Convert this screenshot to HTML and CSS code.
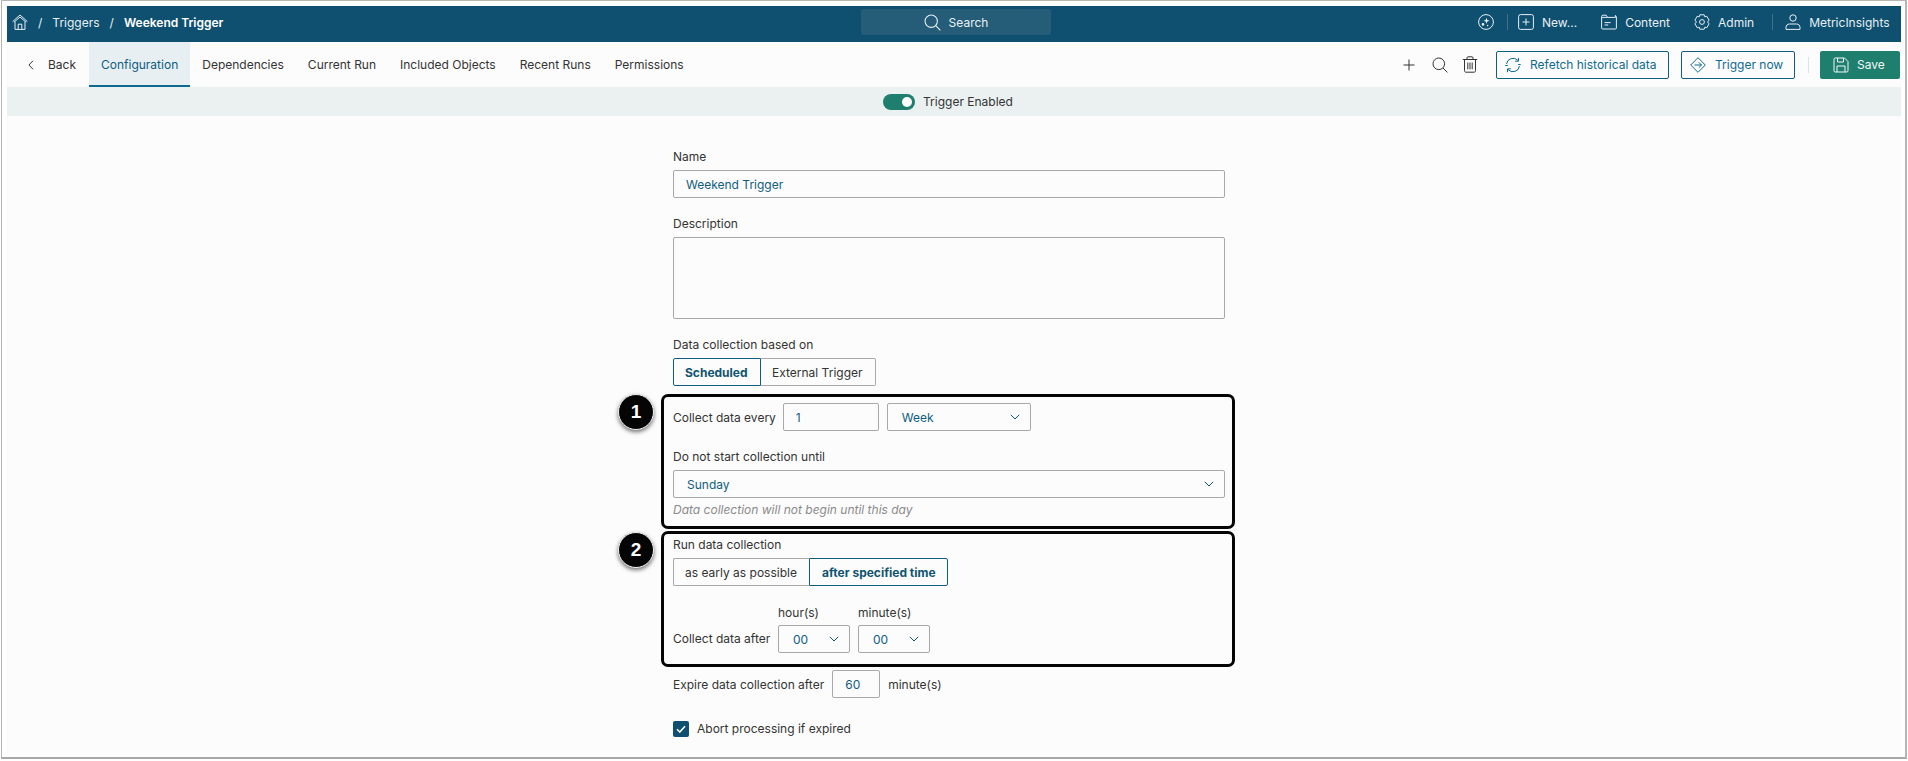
FILE: index.html
```html
<!DOCTYPE html>
<html lang="en">
<head>
<meta charset="utf-8">
<title>Weekend Trigger</title>
<link rel="stylesheet" href="styles.css">
</head>
<body>
<div class="frame">
  <div class="app">
    <header class="topbar">
      <div class="crumbs">
        <svg class="ico home" viewBox="0 0 16 16"><path d="M.6 7.6 8 1l7.4 6.6M2 8.2 8 3l6 5.2M3 7.6v7.8h10V7.6M6.2 15.4V10.2h3.6v5.2"/></svg>
        <span class="sep">/</span>
        <span class="crumb">Triggers</span>
        <span class="sep">/</span>
        <span class="crumb current">Weekend Trigger</span>
      </div>
      <div class="search">
        <svg class="ico search-ico" viewBox="0 0 16 16"><circle cx="6.8" cy="6.8" r="5.8"/><path d="m11 11 4.4 4.4"/></svg>
        <span>Search</span>
      </div>
      <nav class="usernav">
        <svg class="ico ai" viewBox="0 0 16 16"><circle cx="8" cy="8" r="7.4"/><path class="fill" d="M8.5 3.8 9.3 6l2.2.8-2.2.8-.8 2.2-.8-2.2-2.2-.8 2.2-.8z"/><circle class="fill" cx="5" cy="10.4" r="1.3"/><circle class="fill" cx="9.6" cy="11.6" r=".8"/></svg>
        <span class="vline first"></span>
        <span class="navitem new"><svg class="ico" viewBox="0 0 16 16"><rect x=".6" y=".6" width="14.8" height="14.8" rx="2"/><path d="M8 4.5v7M4.5 8h7"/></svg>New...</span>
        <span class="navitem content"><svg class="ico" viewBox="0 0 16 16"><path d="M.6 14V2.4c0-.7.5-1.2 1.2-1.2h3.4l1.4 2.2h7.8v-2l1 1.6v11c0 .6-.4 1-1 1H1.6c-.6 0-1-.4-1-1zM1 3.4h5.6M3.6 8.6h6M3.6 11h3.6"/></svg>Content</span>
        <span class="navitem admin"><svg class="ico" viewBox="0 0 16 16"><path d="M5.8.8h4.4l.6 2 2-.5 2.3 3.8-1.5 1.9 1.5 1.9-2.3 3.8-2-.5-.6 2H5.8l-.6-2-2 .5L.9 9.9 2.400 8 .9 6.100l2.300-3.800 2 .5z"/><circle cx="8" cy="8" r="2.400"/></svg>Admin</span>
        <span class="vline"></span>
        <span class="navitem user"><svg class="ico" viewBox="0 0 16 16"><circle cx="8" cy="4" r="3.200"/><path d="M1 15.400v-2c0-2 1.500-3.400 3.500-3.400h7c2 0 3.500 1.400 3.500 3.400v2z"/></svg>MetricInsights</span>
      </nav>
    </header>

    <div class="tabbar">
      <span class="back"><svg class="chev-left" viewBox="0 0 6 10"><path d="M5 .8.9 5 5 9.200"/></svg>Back</span>
      <ul class="tabs">
        <li class="tab active">Configuration</li>
        <li class="tab">Dependencies</li>
        <li class="tab">Current Run</li>
        <li class="tab">Included Objects</li>
        <li class="tab">Recent Runs</li>
        <li class="tab">Permissions</li>
      </ul>
      <div class="actions">
        <svg class="tool plus" viewBox="0 0 12 12"><path d="M6 .5v11M.5 6h11"/></svg>
        <svg class="tool lens" viewBox="0 0 16 16"><circle cx="6.800" cy="6.800" r="5.800"/><path d="m11 11 4.400 4.400"/></svg>
        <svg class="tool bin" viewBox="0 0 16 17"><path d="M.8 3.500h14.400M5 3.500V1.800c0-.6.400-1 1-1h4c.6 0 1 .4 1 1v1.700M2.500 3.500v11.200c0 .9.600 1.500 1.500 1.500h8c.9 0 1.500-.6 1.500-1.500V3.500M5.800 6.500v6.800M8 6.500v6.800M10.200 6.500v6.800"/></svg>
        <button class="btn outline refetch"><svg class="btn-ico" viewBox="0 0 16 16"><path d="M1.500 7A6.600 6.600 0 0 1 13 3.500M14.500 9A6.600 6.600 0 0 1 3 12.500M13.500.8v3.400h-3.400M2.500 15.200v-3.400h3.400M.3 8.500h2.500M13.200 7.500h2.500"/></svg>Refetch historical data</button>
        <button class="btn outline trigger"><svg class="btn-ico" viewBox="0 0 16 16"><path d="M8 .7 15.300 8 8 15.300.7 8zM4.500 8h7M8.800 5.300 11.500 8l-2.700 2.700"/></svg>Trigger now</button>
        <span class="tooldiv"></span>
        <button class="btn solid"><svg class="btn-ico" viewBox="0 0 16 16"><path d="M1 2.200C1 1.500 1.500 1 2.200 1h9.300L15 4.500v9.300c0 .7-.5 1.200-1.200 1.200H2.200C1.500 15 1 14.500 1 13.800zM4.500 1v4h6V1M4 15V9h8v6"/></svg>Save</button>
      </div>
    </div>

    <div class="band">
      <span class="toggle"><span class="knob"></span></span>
      <span>Trigger Enabled</span>
    </div>

    <main class="form">
      <label class="label">Name</label>
      <input class="field wide" value="Weekend Trigger">

      <label class="label gap18">Description</label>
      <textarea class="field wide area"></textarea>

      <label class="label gap18">Data collection based on</label>
      <div class="seg">
        <span class="seg-btn on">Scheduled</span>
        <span class="seg-btn external">External Trigger</span>
      </div>

      <div class="row r-every">
        <span>Collect data every</span>
        <input class="field num" value="1">
        <span class="field select week">Week<svg class="chev" viewBox="0 0 10 6"><path d="M.8.8 5 5 9.200.8"/></svg></span>
      </div>

      <label class="label gap18">Do not start collection until</label>
      <span class="field select wide">Sunday<svg class="chev" viewBox="0 0 10 6"><path d="M.8.8 5 5 9.200.8"/></svg></span>
      <p class="hint">Data collection will not begin until this day</p>

      <label class="label gap19">Run data collection</label>
      <div class="seg">
        <span class="seg-btn early">as early as possible</span>
        <span class="seg-btn on">after specified time</span>
      </div>

      <div class="time-grid">
        <span></span>
        <span class="unit">hour(s)</span>
        <span class="unit">minute(s)</span>
        <span class="raised">Collect data after</span>
        <span class="field select tiny">00<svg class="chev" viewBox="0 0 10 6"><path d="M.8.8 5 5 9.200.8"/></svg></span>
        <span class="field select tiny">00<svg class="chev" viewBox="0 0 10 6"><path d="M.8.8 5 5 9.200.8"/></svg></span>
      </div>

      <div class="row r-expire">
        <span>Expire data collection after</span>
        <input class="field num small" value="60">
        <span>minute(s)</span>
      </div>

      <div class="check-row">
        <span class="check"><svg viewBox="0 0 10 8"><path d="M1 4.200 3.800 7 9 1.200"/></svg></span>
        <span class="raised">Abort processing if expired</span>
      </div>

      <div class="note note-one"></div>
      <div class="note note-two"></div>
      <div class="badge badge-one">1</div>
      <div class="badge badge-two">2</div>
    </main>
  </div>
</div>
</body>
</html>
```

FILE: styles.css
```css
* { box-sizing: border-box; }
html, body { margin: 0; padding: 0; background: #fff; }
body {
  width: 1908px;
  height: 761px;
  overflow: hidden;
  font-family: Inter, "Liberation Sans", sans-serif;
  font-size: 12px;
  color: #333;
}
.frame {
  width: 1906px;
  height: 759px;
  margin-left: 1px;
  padding: 5px 4px 0 5px;
  background: #fff;
  border: 1px solid #b5b5b5;
  border-bottom: 2px solid #a8a8a8;
  border-right-width: 2px;
}
.app { height: 751px; background: #fcfcfc; }

/* top bar */
.topbar {
  display: grid;
  grid-template-columns: 854px 190px 1fr;
  align-items: center;
  height: 36px;
  padding-bottom: 4px;
  background: #0f4f70;
  color: #e8f0f4;
}
.ico { width: 16px; height: 16px; fill: none; stroke: currentColor; stroke-width: 1; flex: none; }
.ico .fill { fill: currentColor; stroke: none; }
.crumbs { display: flex; align-items: center; padding-left: 5px; }
.sep { margin: 0 10px; }
.crumb.current { font-weight: 600; color: #fff; }
.search {
  display: flex;
  align-items: center;
  justify-content: center;
  gap: 8px;
  height: 26px;
  background: #255d79;
  border-radius: 2px;
}
.search-ico { width: 17px; height: 17px; }
.usernav { display: flex; align-items: center; padding-left: 427px; }
.usernav .ai { margin-right: 13px; }
.vline { width: 1px; height: 16px; background: #40708b; }
.vline.first { margin-right: 10px; }
.navitem { display: flex; align-items: center; gap: 8px; white-space: nowrap; }
.navitem.new { margin-right: 24px; }
.navitem.content { margin-right: 24px; }
.navitem.admin { margin-right: 18px; }
.navitem.user { margin-left: 12px; }

/* tabs */
.tabbar { display: flex; align-items: center; height: 45px; }
.back { display: flex; align-items: center; width: 82px; padding-left: 21px; }
.chev-left { width: 6px; height: 10px; margin-right: 14px; fill: none; stroke: #333; stroke-width: 1; }
.tabs { display: flex; height: 45px; margin: 0; padding: 0; list-style: none; }
.tab { display: flex; align-items: center; padding: 0 12px; }
.tab.active { background: #e8eff2; color: #0f5d80; box-shadow: inset 0 -2px 0 #0f6a8f; }
.actions { display: flex; align-items: center; margin-left: auto; padding-right: 1px; }
.tool { fill: none; stroke: #333; stroke-width: 1; flex: none; }
.plus { width: 12px; height: 12px; margin-right: 17px; }
.lens { width: 16px; height: 16px; margin-right: 14px; }
.bin { width: 16px; height: 17px; margin-right: 18px; }
.btn {
  display: flex;
  align-items: center;
  height: 28px;
  padding: 0 8px;
  font: inherit;
  white-space: nowrap;
  border-radius: 2px;
}
.btn.outline { background: #fcfcfc; color: #0f6a8f; border: 1px solid #0f5d80; }
.btn.refetch { width: 173px; gap: 9px; margin-right: 12px; }
.btn.trigger { width: 114px; gap: 9px; }
.btn.solid { width: 80px; gap: 8px; padding-left: 13px; background: #1f7f6f; color: #f2f8f6; border: 0; }
.btn-ico { width: 16px; height: 16px; fill: none; stroke: currentColor; stroke-width: 1; flex: none; }
.tooldiv { width: 1px; height: 16px; margin: 0 11px 0 13px; background: #e2e2e2; }

/* band */
.band {
  display: flex;
  align-items: center;
  justify-content: center;
  gap: 8px;
  height: 29px;
  padding-right: 12px;
  background: #ebf1f1;
}
.toggle {
  display: flex;
  align-items: center;
  justify-content: flex-end;
  width: 32px;
  height: 16px;
  padding-right: 3px;
  background: #1f7f6f;
  border-radius: 8px;
}
.knob { width: 10px; height: 10px; background: #fff; border-radius: 50%; }

/* form */
.form {
  position: relative;
  display: flex;
  flex-direction: column;
  align-items: flex-start;
  width: 552px;
  margin-left: 666px;
  padding-top: 33px;
}
.label { display: block; height: 16px; line-height: 16px; margin-bottom: 5px; }
.gap18 { margin-top: 18px; }
.gap19 { margin-top: 19px; }
.field {
  display: block;
  height: 28px;
  padding: 0 12px;
  background: #fcfcfc;
  border: 1px solid #a8a8a8;
  border-radius: 2px;
  font: inherit;
  color: #0f5d80;
  outline: 0;
}
.wide { width: 552px; }
.area { height: 82px; resize: none; }
.select { display: flex; align-items: center; justify-content: space-between; padding: 0 10px 0 13px; }
.select.week, .select.tiny { padding-left: 14px; }
.chev { width: 10px; height: 6px; fill: none; stroke: #0f5470; stroke-width: 1; flex: none; }
.seg { display: flex; height: 28px; }
.seg-btn {
  display: flex;
  align-items: center;
  padding: 0 11px;
  white-space: nowrap;
  border: 1px solid #a8a8a8;
  border-radius: 2px;
}
.seg-btn.on { font-weight: 700; color: #0f5470; border-color: #0f5d80; }
.seg-btn.on:first-child { width: 88px; border-radius: 2px 0 0 2px; }
.seg-btn.external { width: 115px; border-left: 0; border-radius: 0 2px 2px 0; }
.seg-btn.early { width: 136px; border-right: 0; border-radius: 2px 0 0 2px; }
.seg-btn.early + .on { width: 139px; padding-left: 12px; border-radius: 0 2px 2px 0; }
.row { display: flex; align-items: center; white-space: nowrap; }
.r-every { margin-top: 17px; }
.num { width: 96px; margin-left: 7px; }
.week { width: 144px; margin-left: 8px; }
.hint { height: 16px; margin: 4px 0 0; line-height: 16px; font-style: italic; color: #8a8a8a; }
.time-grid {
  display: grid;
  grid-template-columns: 97px 72px 72px;
  grid-template-rows: 16px 28px;
  column-gap: 8px;
  row-gap: 5px;
  align-items: center;
  margin-top: 18px;
  white-space: nowrap;
}
.raised { padding-bottom: 2px; }
.tiny { width: 72px; }
.r-expire { margin-top: 17px; }
.num.small { width: 48px; margin-left: 8px; margin-right: 8px; }
.check-row { display: flex; align-items: center; gap: 8px; margin-top: 23px; height: 16px; }
.check {
  display: flex;
  align-items: center;
  justify-content: center;
  width: 16px;
  height: 16px;
  background: #0f4f70;
  border-radius: 2px;
}
.check svg { width: 10px; height: 8px; fill: none; stroke: #fff; stroke-width: 1.6; }

/* annotation overlays */
.note {
  position: absolute;
  left: -12px;
  width: 574px;
  border: 3px solid #050505;
  border-radius: 7px;
}
.note-one { top: 278px; height: 135px; }
.note-two { top: 415px; height: 136px; }
.badge {
  position: absolute;
  left: -55px;
  display: flex;
  align-items: center;
  justify-content: center;
  width: 36px;
  height: 36px;
  background: #050505;
  color: #fff;
  font-family: "Liberation Sans", sans-serif;
  font-weight: 700;
  font-size: 19px;
  border: 1px solid #f4f4f4;
  border-radius: 50%;
  box-shadow: 0 2px 4px rgba(0, 0, 0, .55);
}
.badge-one { top: 278px; }
.badge-two { top: 416px; }
```
